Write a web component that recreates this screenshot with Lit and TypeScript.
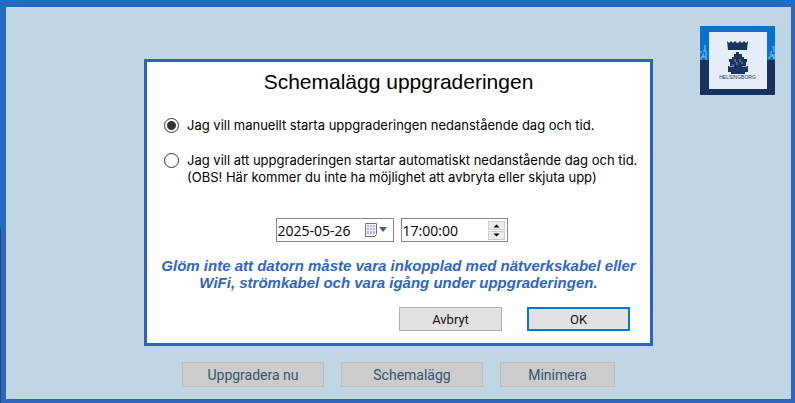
import { LitElement, html, css } from "lit";
import { customElement, state } from "lit/decorators.js";

@customElement("city-logo")
class CityLogo extends LitElement {
  static styles = css`
    :host { display: block; }
    .logo { display: block; width: 75px; height: 69px; }
    .name { font-family: "Liberation Sans", sans-serif; font-size: 5px; }
  `;

  render() {
    return html`
      <svg class="logo" viewBox="0 0 75 69" role="img" aria-label="Helsingborg">
        <rect width="75" height="35" fill="#0074d0" />
        <rect y="34" width="75" height="35" fill="#17335d" />
        <g fill="none" stroke="#8fc4ee" stroke-width="1">
          <path d="M1 34v-3h2v-4M3 25h2v-3M5 19v3M6 25v9M3 31h3M1 27v-2" />
          <path d="M69 33v-2h2v-6M72 21h3M74 22v4M72 28l2 5M74 28v5" />
        </g>
        <rect x="9" y="6" width="58" height="57" fill="#e5edf6" />
        <g fill="#18355f">
          <path d="M27 15l2 2 2-2 2 2 2-2 2 2h1l2-2 2 2 2-2 2 2 2-2-1 9H28z" />
          <path d="M36 26h3v2h3v3h2v2h3v3h-1v4h2v6h-3v2H31v-2h-3v-6h2v-4h-1v-3h3v-2h2v-3h2z" />
        </g>
        <path
          d="M29 40.500h5M42 40.500h5M35 33v3M40 33v3M33 38v2M37 36v3M42 36v2"
          fill="none"
          stroke="#8a9ab5"
          stroke-width="1"
        />
        <text class="name" x="37.500" y="53" text-anchor="middle" fill="#18355f">HELSINGBORG</text>
      </svg>
    `;
  }
}

@customElement("app-root")
class AppRoot extends LitElement {
  @state() private mode = "manual";

  static styles = css`
    * { box-sizing: border-box; }
    :host {
      display: block;
      font-family: Inter, "Liberation Sans", sans-serif;
      font-size: 13px;
      color: #000;
    }
    .desktop {
      min-height: 100vh;
      display: flex;
      padding: 2px 0 0 1px;
      background: linear-gradient(#0078d7 0, #0078d7 56%, #1c4a8c 57%, #1c4a8c 100%);
    }
    .window {
      flex: 1;
      display: grid;
      grid-template-columns: minmax(0, 1fr) minmax(0, 509px) minmax(0, 1fr);
      align-content: start;
      border: solid #3065bd;
      border-width: 5px 4px 4px 5px;
      background: #c1d6e4;
    }
    .brand {
      grid-column: 3;
      grid-row: 1;
      justify-self: end;
      margin: 19px 16px 0 0;
    }
    .dialog {
      grid-column: 2;
      grid-row: 1;
      margin-top: 52px;
      padding: 8px 12px 12px;
      border: 3px solid #2f63bb;
      background: #fff;
    }
    .title {
      margin: 0;
      font-family: "Liberation Sans", sans-serif;
      font-size: 21px;
      font-weight: 400;
      line-height: 24px;
      text-align: center;
    }
    .choices {
      margin: 0;
      padding: 23px 0 0 5px;
      border: 0;
      display: grid;
      gap: 18px;
    }
    .choice {
      display: flex;
      align-items: flex-start;
      gap: 8px;
      line-height: 17px;
    }
    .radio {
      appearance: none;
      flex: none;
      width: 15px;
      height: 15px;
      margin: 1px 0 0;
      border: 1px solid #333;
      border-radius: 50%;
      background: #fff;
    }
    .radio:checked { background: radial-gradient(circle, #333 0 4px, #fff 5px); }
    .when {
      display: flex;
      justify-content: center;
      gap: 7px;
      margin-top: 32px;
      padding-right: 14px;
    }
    .field {
      display: flex;
      align-items: center;
      height: 24px;
      border: 1px solid #858585;
    }
    .date { width: 118px; }
    .time { width: 107px; }
    .value {
      flex: 1;
      min-width: 0;
      height: 22px;
      padding: 1px 0 0 1px;
      border: 0;
      outline: 0;
      background: none;
      font: 14px "Open Sans", sans-serif;
      color: #000;
    }
    .picker {
      padding: 0;
      border: 0;
      margin-right: 5px;
      background: none;
      display: flex;
    }
    .spinner { display: grid; gap: 1px; margin-right: 2px; }
    .step {
      display: flex;
      padding: 0;
      border: 1px solid #ccc;
      background: #ececec;
    }
    .note {
      margin: 15px 0 0;
      font-family: "Liberation Sans", sans-serif;
      font-size: 15px;
      font-weight: 700;
      font-style: italic;
      line-height: 17px;
      text-align: center;
      color: #3065c0;
    }
    .answers {
      display: flex;
      justify-content: flex-end;
      gap: 25px;
      margin-top: 16px;
      padding-right: 8px;
    }
    .answer {
      width: 103px;
      height: 24px;
      padding: 2px 0 0;
      border: 1px solid #adadad;
      background: #e1e1e1;
      font: 13px/18px Roboto, sans-serif;
      color: #111;
    }
    .primary { border: 2px solid #0078d7; padding: 1px 0 0; }
    .actions {
      grid-column: 1 / -1;
      display: flex;
      justify-content: center;
      gap: 17px;
      padding: 16px 0 12px;
    }
    .action {
      width: 142px;
      height: 25px;
      padding: 0;
      border: 1px solid #bfbfbf;
      background: #ccc;
      font: 14px/20px Roboto, sans-serif;
      color: #36536f;
    }
    .narrow { width: 115px; }
  `;

  private choice(value: string, text: unknown) {
    return html`
      <label class="choice">
        <input
          class="radio"
          type="radio"
          name="mode"
          value=${value}
          .checked=${this.mode === value}
          @change=${() => (this.mode = value)}
        />
        <span>${text}</span>
      </label>
    `;
  }

  render() {
    return html`
      <div class="desktop">
        <main class="window">
          <city-logo class="brand"></city-logo>
          <form class="dialog" role="dialog" aria-labelledby="title" @submit=${(e: Event) => e.preventDefault()}>
            <h1 class="title" id="title">Schemalägg uppgraderingen</h1>
            <fieldset class="choices">
              ${this.choice("manual", "Jag vill manuellt starta uppgraderingen nedanstående dag och tid.")}
              ${this.choice(
                "auto",
                html`Jag vill att uppgraderingen startar automatiskt nedanstående dag och tid.<br />(OBS! Här kommer du
                  inte ha möjlighet att avbryta eller skjuta upp)`
              )}
            </fieldset>
            <div class="when">
              <div class="field date">
                <input class="value" type="text" aria-label="Datum" value="2025-05-26" />
                <button class="picker" type="button" aria-label="Välj datum">
                  <svg width="24" height="16" viewBox="0 0 24 16">
                    <path d="M1.500 1.500h11v11l-2 2h-9z" fill="#f4f4f6" stroke="#77706f" />
                    <path d="M3 3h8v9H3z" fill="#b3bdd2" />
                    <path d="M3 5.500h8M3 8.500h8M5.500 3v9M8.500 3v9" stroke="#e8ebf2" />
                    <path d="M15 5h8l-4 5z" fill="#41608f" />
                  </svg>
                </button>
              </div>
              <div class="field time">
                <input class="value" type="text" aria-label="Tid" value="17:00:00" />
                <div class="spinner">
                  <button class="step" type="button" aria-label="Öka">
                    <svg width="15" height="7" viewBox="0 0 15 7"><path d="M4.500 5.500l3-3 3 3z" /></svg>
                  </button>
                  <button class="step" type="button" aria-label="Minska">
                    <svg width="15" height="7" viewBox="0 0 15 7"><path d="M4.500 1.500l3 3 3-3z" /></svg>
                  </button>
                </div>
              </div>
            </div>
            <p class="note">
              Glöm inte att datorn måste vara inkopplad med nätverkskabel eller<br />WiFi, strömkabel och vara igång
              under uppgraderingen.
            </p>
            <div class="answers">
              <button class="answer" type="button">Avbryt</button>
              <button class="answer primary" type="submit">OK</button>
            </div>
          </form>
          <div class="actions">
            <button class="action" type="button">Uppgradera nu</button>
            <button class="action" type="button">Schemalägg</button>
            <button class="action narrow" type="button">Minimera</button>
          </div>
        </main>
      </div>
    `;
  }
}
